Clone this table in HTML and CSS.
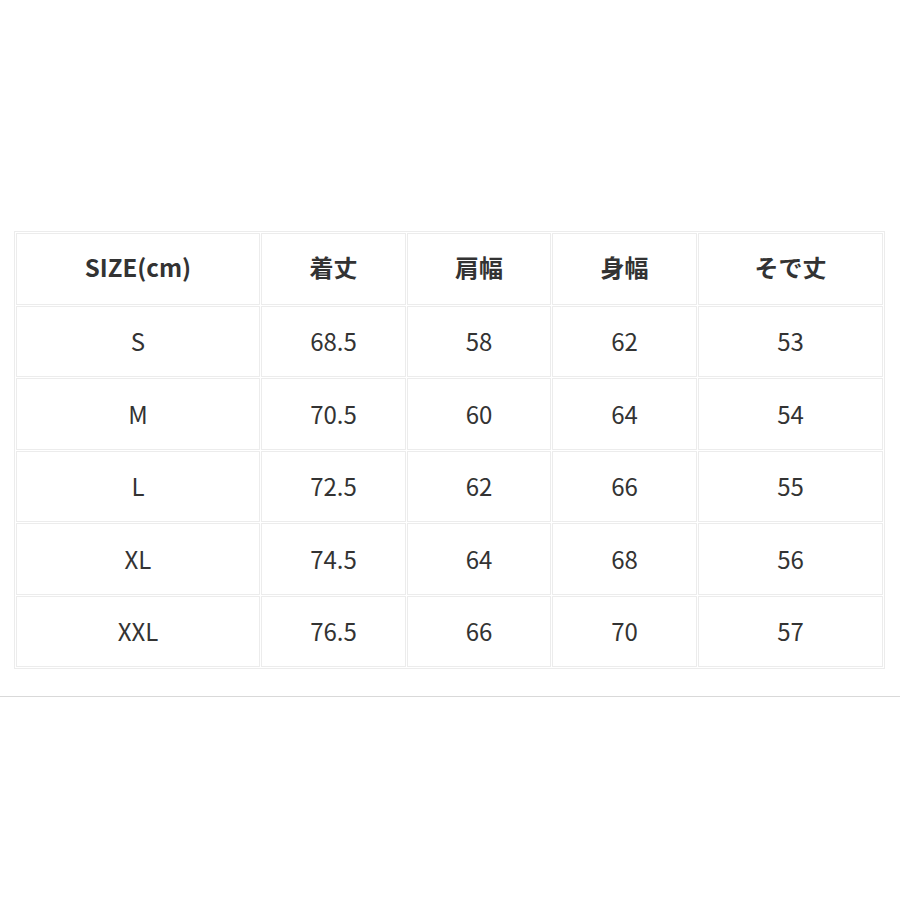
FILE: index.html
```html
<!DOCTYPE html>
<html lang="ja">
<head>
<meta charset="utf-8">
<link rel="stylesheet" href="styles.css">
</head>
<body>
<div class="page">
  <table class="size-table">
    <colgroup>
      <col class="c1"><col class="c2"><col class="c3"><col class="c4"><col class="c5">
    </colgroup>
    <thead>
      <tr><th>SIZE(cm)</th><th>着丈</th><th>肩幅</th><th>身幅</th><th>そで丈</th></tr>
    </thead>
    <tbody>
      <tr><td>S</td><td>68.5</td><td>58</td><td>62</td><td>53</td></tr>
      <tr><td>M</td><td>70.5</td><td>60</td><td>64</td><td>54</td></tr>
      <tr><td>L</td><td>72.5</td><td>62</td><td>66</td><td>55</td></tr>
      <tr><td>XL</td><td>74.5</td><td>64</td><td>68</td><td>56</td></tr>
      <tr><td>XXL</td><td>76.5</td><td>66</td><td>70</td><td>57</td></tr>
    </tbody>
  </table>
  <div class="rule"></div>
</div>
</body>
</html>
```
FILE: styles.css
```css
html, body {
  margin: 0;
  padding: 0;
  background: #ffffff;
}
.page {
  padding-top: 231px;
  font-family: "Noto Sans CJK JP", "Noto Sans", sans-serif;
  color: #333333;
}
.size-table {
  margin-left: 14px;
  width: 871px;
  border-collapse: separate;
  border-spacing: 1px;
  border: 1px solid #ececec;
  table-layout: fixed;
}
.c1 { width: 244px; }
.c2 { width: 145px; }
.c3 { width: 144px; }
.c4 { width: 145px; }
.c5 { width: 185px; }
.size-table th,
.size-table td {
  height: 69.5px;
  padding: 0;
  border: 1px solid #ececec;
  text-align: center;
  vertical-align: middle;
  font-size: 24px;
  line-height: 1;
}
.size-table th {
  font-weight: 700;
  padding-bottom: 4px;
  height: 65.5px;
}
.size-table td {
  font-weight: 400;
}
.rule {
  margin-top: 27px;
  height: 1px;
  background: #d9d9d9;
}
```
